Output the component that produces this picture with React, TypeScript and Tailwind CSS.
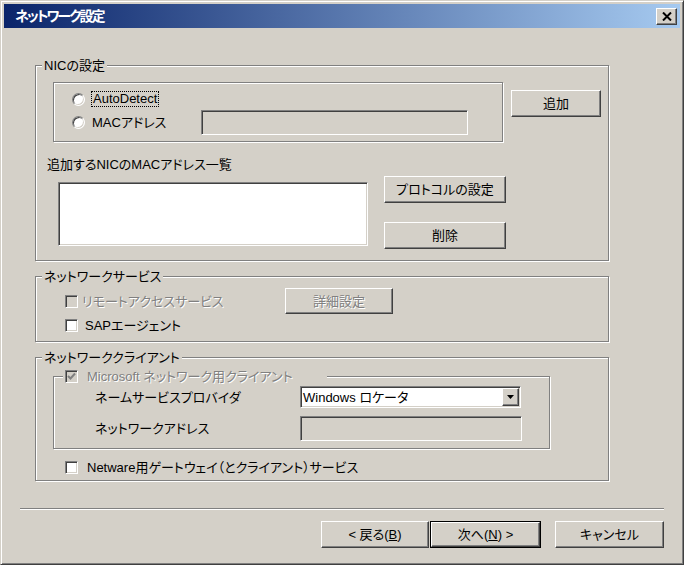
import type { ReactNode } from 'react'

const raised = 'bg-[#d4d0c8] border border-t-white border-l-white border-r-[#404040] border-b-[#404040] shadow-[inset_-1px_-1px_0_#808080]'
const sunken = 'border border-t-[#808080] border-l-[#808080] border-r-white border-b-white shadow-[inset_1px_1px_0_#404040,inset_-1px_-1px_0_#d4d0c8]'
const etched = 'border border-[#808080] shadow-[inset_1px_1px_0_#fff,1px_1px_0_#fff]'
const dim = 'text-[#808080] [text-shadow:1px_1px_0_#fff]'

function Button({ children, className = '', disabled = false }: { children: ReactNode; className?: string; disabled?: boolean }) {
  return (
    <div className={`${raised} flex items-center justify-center leading-[15px] ${disabled ? dim : ''} ${className}`}>
      {children}
    </div>
  )
}

function Check({ checked = false, disabled = false }: { checked?: boolean; disabled?: boolean }) {
  return (
    <div className={`${sunken} w-[13px] h-[13px] shrink-0 flex items-center justify-center ${disabled ? 'bg-[#d4d0c8]' : 'bg-white'}`}>
      {checked && (
        <svg width="9" height="9" viewBox="0 0 9 9">
          <path d="M1 4 L3.5 6.5 L8 1.5" fill="none" stroke={disabled ? '#808080' : '#000'} strokeWidth="2" />
        </svg>
      )}
    </div>
  )
}

function Radio() {
  return (
    <div className="w-[13px] h-[13px] shrink-0 rounded-full bg-white border border-t-[#808080] border-l-[#808080] border-r-white border-b-white shadow-[inset_1px_1px_0_#404040,inset_-1px_-1px_0_#d4d0c8]" />
  )
}

export default function App() {
  return (
    <div className="w-[685px] h-[568px] bg-white font-['Liberation_Sans','Noto_Sans_CJK_JP',sans-serif] text-[13px] text-black [font-feature-settings:'palt']">
      <div className="w-[684px] h-[565px] bg-[#d4d0c8] border border-t-[#d4d0c8] border-l-[#d4d0c8] border-r-[#404040] border-b-[#404040] shadow-[inset_1px_1px_0_#fff,inset_-1px_-1px_0_#808080] p-[3px] flex flex-col">
        {/* title bar */}
        <div className="h-[24px] shrink-0 flex items-center bg-[linear-gradient(to_right,#0a246a,#a6caf0)]">
          <span className="ml-[11px] text-white font-bold text-[14px] tracking-[-2px] leading-[15px]">ネットワーク設定</span>
          <div className={`${raised} ml-auto mr-[3px] w-[21px] h-[17px] flex items-center justify-center`}>
            <svg width="10" height="9" viewBox="0 0 10 9">
              <path d="M1 0.5 L9 8.5 M9 0.5 L1 8.5" stroke="#000" strokeWidth="2" />
            </svg>
          </div>
        </div>

        {/* NIC settings */}
        <fieldset className={`${etched} ml-[31px] mt-[30px] w-[574px] pb-[11px]`}>
          <legend className="ml-[6px] px-[2px] bg-[#d4d0c8] leading-[15px]">NICの設定</legend>
          <div className="flex items-start mt-[9px]">
            <div className={`${etched} ml-[17px] w-[450px] h-[60px] pt-[8px] pl-[18px]`}>
              <div className="flex items-center h-[16px]">
                <Radio />
                <span className="ml-[6px] px-[1px] border border-dotted border-black leading-[14px]">AutoDetect</span>
              </div>
              <div className="flex items-center mt-[3px] h-[25px]">
                <Radio />
                <span className="ml-[7px] w-[109px] leading-[15px]">MACアドレス</span>
                <div className={`${sunken} w-[267px] h-[25px] bg-[#d4d0c8]`} />
              </div>
            </div>
            <Button className="ml-[8px] mt-[8px] w-[90px] h-[27px]">追加</Button>
          </div>
          <div className="ml-[11px] mt-[15px] leading-[15px]">追加するNICのMACアドレス一覧</div>
          <div className="flex items-start mt-[4px]">
            <div className={`${sunken} ml-[22px] mt-[6px] w-[310px] h-[64px] bg-white`} />
            <div className="ml-[16px] flex flex-col">
              <Button className="w-[122px] h-[27px]">プロトコルの設定</Button>
              <Button className="mt-[19px] w-[122px] h-[27px]">削除</Button>
            </div>
          </div>
        </fieldset>

        {/* network services */}
        <fieldset className={`${etched} ml-[31px] mt-[8px] w-[574px] pb-[8px]`}>
          <legend className="ml-[6px] px-[2px] bg-[#d4d0c8] leading-[15px]">ネットワークサービス</legend>
          <div className="flex items-center mt-[4px] h-[26px]">
            <div className="ml-[29px]"><Check disabled /></div>
            <span className={`ml-[4px] w-[203px] leading-[15px] ${dim}`}>リモートアクセスサービス</span>
            <Button disabled className="w-[108px] h-[26px]">詳細設定</Button>
          </div>
          <div className="flex items-center mt-[3px] h-[16px]">
            <div className="ml-[29px]"><Check /></div>
            <span className="ml-[7px] leading-[15px]">SAPエージェント</span>
          </div>
        </fieldset>

        {/* network client */}
        <fieldset className={`${etched} ml-[31px] mt-[8px] w-[574px] pb-[5px]`}>
          <legend className="ml-[6px] px-[2px] bg-[#d4d0c8] leading-[15px]">ネットワーククライアント</legend>
          <fieldset className={`${etched} ml-[17px] mt-[4px] w-[497px] pb-[7px]`}>
            <legend className="ml-[9px] pl-[2px] pr-[34px] bg-[#d4d0c8] leading-[15px]">
              <span className="inline-flex items-center h-[15px]">
                <Check checked disabled />
                <span className={`ml-[9px] ${dim}`}>Microsoft ネットワーク用クライアント</span>
              </span>
            </legend>
            <div className="flex items-center mt-[2px] h-[22px]">
              <span className="ml-[41px] w-[205px] leading-[15px]">ネームサービスプロバイダ</span>
              <div className={`${sunken} w-[221px] h-[22px] p-[1px] bg-white flex items-center`}>
                <span className="flex-1 pl-[1px] leading-[15px]">Windows ロケータ</span>
                <div className={`${raised} w-[17px] h-[18px] flex items-center justify-center`}>
                  <svg width="7" height="4" viewBox="0 0 7 4">
                    <path d="M0 0 H7 L3.5 4 Z" fill="#000" />
                  </svg>
                </div>
              </div>
            </div>
            <div className="flex items-center mt-[8px] h-[25px]">
              <span className="ml-[41px] w-[205px] leading-[15px]">ネットワークアドレス</span>
              <div className={`${sunken} w-[222px] h-[25px] bg-[#d4d0c8]`} />
            </div>
          </fieldset>
          <div className="flex items-center mt-[10px] h-[16px]">
            <div className="ml-[29px]"><Check /></div>
            <span className="ml-[9px] leading-[15px]">Netware用ゲートウェイ（とクライアント）サービス</span>
          </div>
        </fieldset>

        {/* separator */}
        <div className="ml-[16px] mt-[27px] w-[644px] h-[2px] border-t border-t-[#808080] border-b border-b-white" />

        {/* wizard buttons */}
        <div className="flex mt-[11px] ml-[317px]">
          <Button className="w-[108px] h-[27px]">&lt; 戻る(<span className="underline">B</span>)</Button>
          <div className="ml-[1px] w-[111px] h-[27px] border border-black">
            <Button className="w-full h-full">次へ(<span className="underline">N</span>) &gt;</Button>
          </div>
          <Button className="ml-[14px] w-[109px] h-[27px]">キャンセル</Button>
        </div>
      </div>
    </div>
  )
}
